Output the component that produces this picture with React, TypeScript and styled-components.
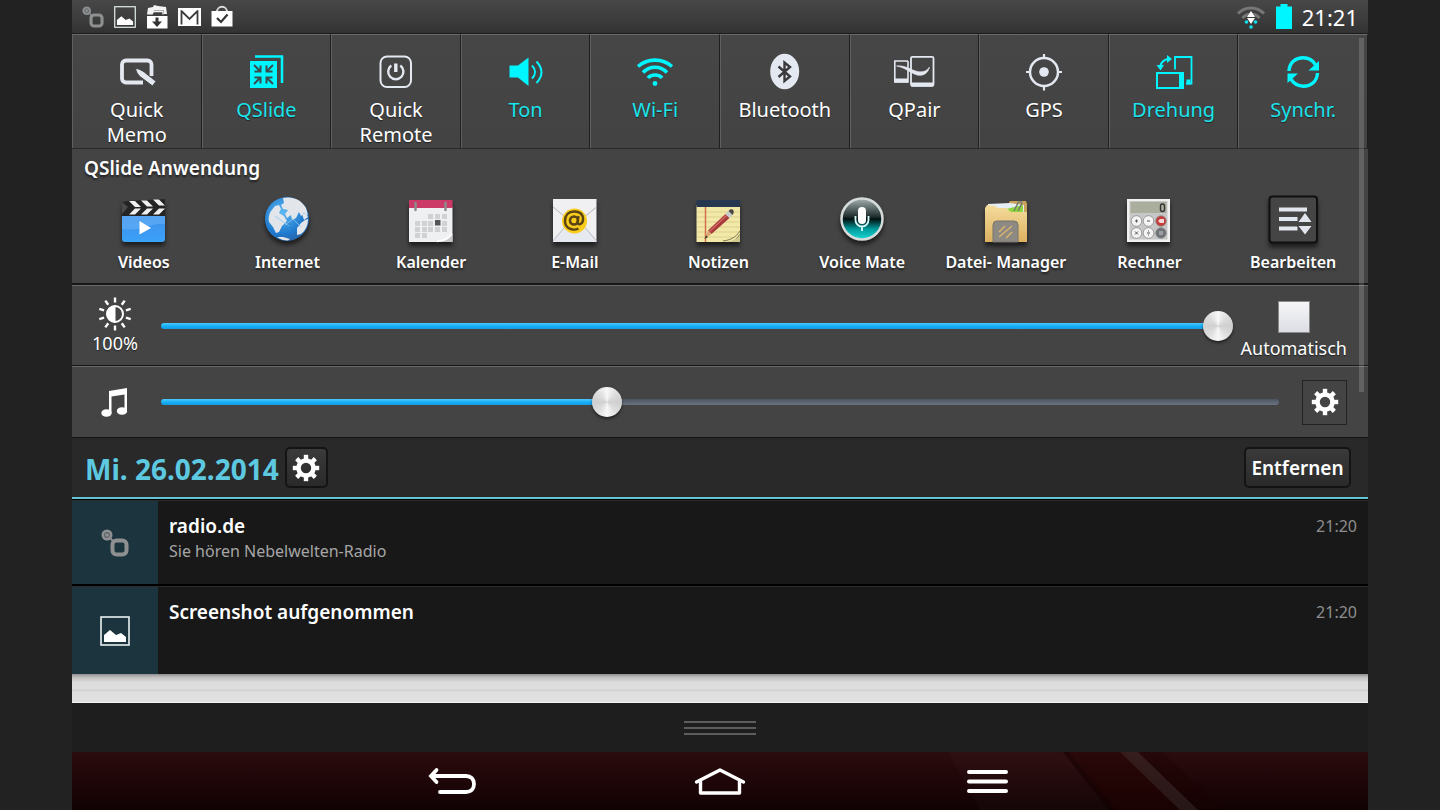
import React, { useState } from "react";
import styled, { createGlobalStyle, css } from "styled-components";

const GlobalStyle = createGlobalStyle`
  *, *::before, *::after { box-sizing: border-box; }
  body {
    margin: 0;
    background: #222222;
    color: #ffffff;
    font-family: "Noto Sans", "Open Sans", sans-serif;
  }
  button, input { font: inherit; color: inherit; }
  button { cursor: pointer; border: 0; padding: 0; background: none; }
  h1, h2, h3, p, ul { margin: 0; padding: 0; }
  ul { list-style: none; }
  svg { display: block; overflow: visible; }
`;

const Device = styled.div`
  width: 90%;
  min-height: 100vh;
  margin: 0 auto;
  display: flex;
  flex-direction: column;
  background: #1e1e1e;
`;

const StatusBar = styled.header`
  height: 33px;
  flex: none;
  padding: 0 10px;
  display: flex;
  align-items: center;
  justify-content: space-between;
  background: linear-gradient(#474747, #3c3c3c 60%, #323232);
`;

const StatusGroup = styled.div<{ $gap: number }>`
  display: flex;
  align-items: center;
  gap: ${(p) => p.$gap}px;
`;

const Clock = styled.time`
  font-size: 22px;
  line-height: 32px;
`;

const Controls = styled.section`
  position: relative;
  background: #444444;
`;

const ScrollThumb = styled.div`
  position: absolute;
  top: 5px;
  right: 4px;
  width: 5px;
  height: 354px;
  background: rgba(255, 255, 255, 0.16);
`;

const TileRow = styled.div`
  display: grid;
  grid-template-columns: repeat(10, 1fr);
  height: 116px;
  border-top: 1px solid #1c1c1c;
  border-bottom: 1px solid #2a2a2a;
`;

const Tile = styled.button<{ $on?: boolean }>`
  min-width: 0;
  padding-top: 17px;
  display: flex;
  flex-direction: column;
  align-items: center;
  border-top: 1px solid #6a6a6a;
  border-left: 1px solid #606060;
  border-right: 1px solid #1f1f1f;
  background: linear-gradient(#464646, #434343);
  color: ${(p) => (p.$on ? "#1ce4ec" : "#ffffff")};
  font-size: 20px;
  line-height: 25px;
  text-shadow: 0 1px 1px #222222;

  svg { color: ${(p) => (p.$on ? "#00f6ff" : "#e4e8f0")}; }
  span { margin-top: 5px; width: 90px; display: flex; justify-content: center; text-align: center; }
`;

const AppSection = styled.section`
  height: 136px;
  border-bottom: 2px solid #171717;
  text-shadow: 0 2px 2px #222222;
`;

const SectionTitle = styled.h2`
  padding: 6px 12px 0;
  font-size: 19px;
  line-height: 26px;
  font-weight: 600;
`;

const AppGrid = styled.div`
  display: grid;
  grid-template-columns: repeat(9, 1fr);
  padding: 11px 3px 0 0;
`;

const AppButton = styled.button`
  display: flex;
  flex-direction: column;
  align-items: center;
  font-size: 16px;
  line-height: 24px;
  font-weight: 600;
  white-space: nowrap;
  text-shadow: inherit;
  svg { filter: drop-shadow(0 4px 2px rgba(0, 0, 0, 0.55)); }
  span { margin-top: 2px; }
`;

const SliderRow = styled.div<{ $height: number }>`
  height: ${(p) => p.$height}px;
  padding-right: 21px;
  display: flex;
  align-items: center;
  border-top: 1px solid #6a6a6a;
  border-bottom: 1px solid #161616;
  font-size: 18px;
  line-height: 24px;
  text-shadow: 0 1px 1px #222222;
`;

const SliderIcon = styled.label`
  width: 86px;
  margin-right: 3px;
  flex: none;
  display: flex;
  flex-direction: column;
  align-items: center;
`;

const Slider = styled.input`
  appearance: none;
  flex: 1;
  min-width: 0;
  height: 32px;
  margin: 0;
  background: transparent;

  &::-webkit-slider-runnable-track {
    height: 6px;
    border-radius: 3px;
    background:
      linear-gradient(#4cc8fc, #12abf6 60%, #1a9be0) 0 0 / var(--fill) 100% no-repeat,
      linear-gradient(#4c5462, #6b7280);
  }
  &::-webkit-slider-thumb {
    appearance: none;
    width: 30px;
    height: 30px;
    margin-top: -12px;
    border-radius: 50%;
    background: conic-gradient(#f8f8f8, #dedede 12%, #cfcfcf 25%, #dedede 38%, #f8f8f8 50%, #dedede 62%, #cfcfcf 75%, #dedede 88%, #f8f8f8);
    box-shadow: 0 2px 3px rgba(0, 0, 0, 0.5);
  }
`;

const AutoLabel = styled.label`
  margin-left: 8px;
  padding-top: 10px;
  display: flex;
  flex-direction: column;
  align-items: center;
  gap: 3px;
`;

const Checkbox = styled.input`
  appearance: none;
  width: 32px;
  height: 32px;
  margin: 0;
  border: 1px solid #8a8a8a;
  background: linear-gradient(#f6f6f8, #dcdee4);
  &:checked { background: #1ba8f2; }
`;

const raised = css`
  border: 2px solid #141414;
  border-radius: 5px;
  background: linear-gradient(#3a3a3a, #2a2a2a);
`;

const SquareButton = styled.button<{ $raised?: boolean }>`
  width: ${(p) => (p.$raised ? 43 : 45)}px;
  height: ${(p) => (p.$raised ? 41 : 45)}px;
  flex: none;
  display: grid;
  place-items: center;
  border: 1px solid #222222;
  ${(p) => p.$raised && raised}
`;

const VolumeSettings = styled.div`
  margin-left: 23px;
`;

const DateBar = styled.header`
  height: 61px;
  flex: none;
  padding: 0 17px 0 13px;
  display: flex;
  align-items: center;
  gap: 6px;
  background: #292929;
  border-bottom: 2px solid #62c5d6;
`;

const DateText = styled.h1`
  padding-top: 2px;
  font-size: 28px;
  line-height: 40px;
  font-weight: 700;
  color: #5dc9e1;
`;

const ClearButton = styled.button`
  ${raised}
  margin-left: auto;
  width: 107px;
  height: 41px;
  font-size: 19px;
  line-height: 28px;
  font-weight: 600;
`;

const Notification = styled.li<{ $height: number }>`
  height: ${(p) => p.$height}px;
  padding-right: 11px;
  display: flex;
  border-top: 1px solid #2c2c2c;
  background: #181818;
  & + & { margin-top: 2px; }
`;

const NotificationList = styled.ul`
  padding-top: 1px;
  flex: none;
  background: #000000;
`;

const NotificationIcon = styled.div`
  width: 86px;
  display: grid;
  place-items: center;
  background: #1c343e;
`;

const NotificationBody = styled.div`
  flex: 1;
  padding: 12px 11px 0;
`;

const NotificationTitle = styled.h3`
  font-size: 19px;
  line-height: 26px;
  font-weight: 600;
`;

const NotificationText = styled.p`
  font-size: 16px;
  line-height: 24px;
  color: #a6a6a6;
`;

const NotificationTime = styled.time`
  padding-top: 13px;
  font-size: 16px;
  line-height: 24px;
  color: #8e8e8e;
`;

const PaperEdge = styled.div`
  height: 29px;
  flex: none;
  background: linear-gradient(
    #8e8e8e 0, #bcbcbc 3px, #dcdcdc 8px, #dfdfdf 15px, #cecece 16px, #e0e0e0 18px, #e0e0e0
  );
  border-bottom: 1px solid #f2f2f2;
`;

const DragHandle = styled.button`
  flex: 1 0 49px;
  width: 100%;
  display: flex;
  flex-direction: column;
  align-items: center;
  justify-content: center;
  gap: 4px;
  background: #1e1e1e;
`;

const HandleLine = styled.span`
  width: 72px;
  height: 2px;
  background: #5c5c5c;
`;

const NavBar = styled.nav`
  position: relative;
  height: 58px;
  flex: none;
  overflow: hidden;
  display: grid;
  grid-template-columns: repeat(3, 268px);
  justify-content: center;
  background: linear-gradient(#2b0c0e, #1c0507 60%, #110203);
`;

const NavStreaks = styled.svg`
  position: absolute;
  top: 0;
  right: 0;
`;

const NavButton = styled.button`
  position: relative;
  display: grid;
  place-items: center;
`;

/* ---------- status icons ---------- */

const RadioMark = ({ size }: { size: number }) => (
  <svg width={size} height={size} viewBox="0 0 28 28" fill="none" stroke="#8d8f90">
    <circle cx="6" cy="6" r="5.500" fill="#8d8f90" stroke="none" />
    <circle cx="6" cy="6" r="2.400" stroke="#5c6468" strokeWidth="1.200" />
    <path d="M8 8l5 5" strokeWidth="2" />
    <rect x="11.500" y="11.500" width="14" height="14" rx="4" strokeWidth="4" />
  </svg>
);

const PictureMark = ({ size }: { size: number }) => (
  <svg width={size} height={size} viewBox="0 0 30 30">
    <rect x="1" y="1" width="28" height="28" fill="none" stroke="#e9f1f1" strokeWidth="1.6" />
    <path d="M4 26v-7l6-5 6 5 5-2 5 4v5z" fill="#fff" />
  </svg>
);

const InboxMark = () => (
  <svg width="22" height="24" viewBox="0 0 22 24">
    <path d="M1 9.500L2 3l5-1 1-2 4 1 8 1 1 7h-3V5.500H8L5 9.500z" fill="#f4f4f4" />
    <path d="M5.500 9.500l2-3h9.500v3" fill="none" stroke="#f4f4f4" strokeWidth="1.400" />
    <rect x="1" y="11" width="20.500" height="12.500" fill="#fff" />
    <path d="M9.500 12.500h3v4H16l-5 5.500-5-5.500h3.500z" fill="#333" />
  </svg>
);

const GmailMark = () => (
  <svg width="23" height="18" viewBox="0 0 23 18">
    <rect width="23" height="18" fill="#fff" />
    <path d="M3.500 16.500V3l8 8 8-8v13.500" fill="none" stroke="#3c3c3c" strokeWidth="1.800" />
    <path d="M1 1.200h21" stroke="#fff" strokeWidth="2" />
  </svg>
);

const StoreMark = () => (
  <svg width="22" height="22" viewBox="0 0 22 22">
    <path d="M6 6C6 -1 16 -1 16 6" fill="none" stroke="#ddd" strokeWidth="1.800" />
    <path d="M.500 5h21v15.500H.500z" fill="#fff" />
    <path d="M6 12l4 4 6.500-7.500" fill="none" stroke="#333" strokeWidth="2.200" />
  </svg>
);

const StatusWifi = () => (
  <svg width="30" height="24" viewBox="0 0 30 24" fill="none">
    <path d="M2 8.500C9 1 21 1 28 8.500" stroke="#777" strokeWidth="3" />
    <path d="M6.500 13C11 8 19 8 23.500 13" stroke="#777" strokeWidth="3" />
    <path d="M15 6l4 6h-8zM11 13h8l-4 6z" fill="#fff" />
    <circle cx="10.500" cy="17" r="1.800" fill="#12dff0" />
    <circle cx="19.500" cy="17" r="1.800" fill="#12dff0" />
    <circle cx="15" cy="22" r="1.800" fill="#12dff0" />
  </svg>
);

const Battery = () => (
  <svg width="16" height="25" viewBox="0 0 16 25" fill="#00f6ff">
    <path d="M4.500 0h7v2.500H16V25H0V2.500h4.500z" />
  </svg>
);

/* ---------- quick setting icons ---------- */

const TileIcon = ({ children }: { children: React.ReactNode }) => (
  <svg width="40" height="40" viewBox="0 0 40 40" fill="none" stroke="currentColor">
    {children}
  </svg>
);

const tiles: { label: string; on?: boolean; icon: React.ReactNode }[] = [
  {
    label: "Quick Memo",
    icon: (
      <>
        <path d="M26 30.500H9a4 4 0 0 1-4-4v-14a4 4 0 0 1 4-4h21.500a4 4 0 0 1 4 4V24" strokeWidth="3.800" />
        <path d="M18.500 16.500c3 0 6 1.500 9 3.800l11.500 9-3.500 4.700-12-9c-2.500-2-4.500-5-5-8.500z" fill="currentColor" stroke="#444" strokeWidth="1" />
      </>
    ),
  },
  {
    label: "QSlide",
    on: true,
    icon: (
      <>
        <path d="M9 4.500h27V31" strokeWidth="2.500" />
        <rect x="4" y="9" width="27" height="27" fill="currentColor" stroke="none" />
        <g stroke="#3c4a4c" strokeWidth="2">
          <path d="M8 13l6 6M14.500 13.500v6h-6M27 13l-6 6M20.500 13.500v6h6M8 32l6-6M14.500 31.500v-6h-6M27 32l-6-6M20.500 31.500v-6h6" />
        </g>
      </>
    ),
  },
  {
    label: "Quick Remote",
    icon: (
      <>
        <rect x="4.500" y="4.500" width="30.500" height="30.500" rx="6.500" strokeWidth="2" />
        <path d="M15.300 13.500a7.600 7.600 0 1 0 9 0" strokeWidth="2.400" />
        <path d="M19.800 11.500v8.500" strokeWidth="3.400" />
      </>
    ),
  },
  {
    label: "Ton",
    on: true,
    icon: (
      <>
        <path d="M3.500 13.500h8.500l10.500-8v28.500l-10.500-8.500h-8.500z" fill="currentColor" stroke="none" />
        <path d="M26 13.500c4 4 4 9 0 13M30.500 9.500c6.500 7 6.500 14.500 0 21.500" strokeWidth="2" />
      </>
    ),
  },
  {
    label: "Wi-Fi",
    on: true,
    icon: (
      <>
        <path d="M3 14.500C12.500 6 27.500 6 37 14.500M8 20.500C14.500 13.500 25.500 13.500 32 20.500M13 26C16 22 24 22 27 26" strokeWidth="3.600" />
        <circle cx="20" cy="31.500" r="2.400" fill="currentColor" stroke="none" />
      </>
    ),
  },
  {
    label: "Bluetooth",
    icon: (
      <>
        <ellipse cx="19.700" cy="19.500" rx="14.500" ry="17.800" fill="currentColor" stroke="none" />
        <path d="M13.500 14.500l11.500 10-5.500 4.500V10.500l5.500 4.500-11.500 10" stroke="#3a3a3c" strokeWidth="2.400" />
      </>
    ),
  },
  {
    label: "QPair",
    icon: (
      <>
        <path d="M14 9H.800v21H14V9" strokeWidth="1.600" />
        <path d="M14 28.500H1" strokeWidth="4" />
        <rect x="17" y="4.800" width="22.500" height="29" rx="1.500" strokeWidth="1.800" />
        <path d="M17 32.500h22.500" strokeWidth="4" />
        <path d="M2.500 14c9-1 14 4 21 5.500 5 1 9 0 12-4.500C34 22 28 25 21.500 22.500 15 20 10 15 2.500 14z" fill="currentColor" strokeWidth=".600" />
      </>
    ),
  },
  {
    label: "GPS",
    icon: (
      <>
        <circle cx="20" cy="20" r="14" strokeWidth="2.500" />
        <circle cx="20" cy="20" r="4.800" fill="currentColor" stroke="none" />
        <path d="M20 2v5M20 33v5.500M2 20h5M33 20h5" strokeWidth="2.200" />
      </>
    ),
  },
  {
    label: "Drehung",
    on: true,
    icon: (
      <>
        <rect x="3" y="21" width="26" height="15" strokeWidth="2" />
        <path d="M27.500 20.500v16" strokeWidth="5" />
        <path d="M21 17.500V5h16.500v26.500H32" strokeWidth="1.800" />
        <path d="M34.500 27.500v5" strokeWidth="4" />
        <path d="M6 15c1-4.500 4-7.500 8-8" strokeWidth="2.200" />
        <path d="M13 3l5 4-5 4zM2.500 13h7.500l-3.500 5.500z" fill="currentColor" stroke="none" />
      </>
    ),
  },
  {
    label: "Synchr.",
    on: true,
    icon: (
      <>
        <path d="M6 19C6.500 10 13 5.800 20 5.800c5.500 0 10 2.700 12.500 7M34.500 21C34 30 27.500 34.200 20.500 34.200c-5.500 0-10-2.700-12.500-7" strokeWidth="3.400" />
        <path d="M36 9v9.500H25.500zM4.500 31v-9.500H15z" fill="currentColor" stroke="none" />
      </>
    ),
  },
];

/* ---------- app icons ---------- */

const AppIcon = ({ children }: { children: React.ReactNode }) => (
  <svg width="56" height="56" viewBox="0 0 56 56" fill="none">
    {children}
  </svg>
);

const calendarDays = [
  [25, 22], [32, 22], [39, 22],
  [12, 29], [19, 29], [25, 29], [39, 29],
  [12, 35], [19, 35], [25, 35], [32, 35], [39, 35],
  [12, 41], [19, 41],
];

const apps: { label: string; icon: React.ReactNode }[] = [
  {
    label: "Videos",
    icon: (
      <>
        <defs>
          <linearGradient id="video" x2="0" y2="1">
            <stop stopColor="#3f8fe8" />
            <stop offset="1" stopColor="#3ba2fa" />
          </linearGradient>
        </defs>
        <path d="M6 10l6-1 37-2v17H6z" fill="#242424" />
        <path d="M6 10l6 5-6 7z" fill="#4a4a4a" />
        <path d="M13 9h6l6 6h-6zM25 8.500h6l6 6h-6zM37 7.500h6l6 6h-6zM19 16.500h6l-6 6h-6zM31 16.500h6l-6 6h-6zM43 16.500h6l-6 6h-6z" fill="#f0f0f0" />
        <path d="M6 24h43v23a3 3 0 0 1-3 3H9a3 3 0 0 1-3-3z" fill="url(#video)" />
        <path d="M6 24h43v8c-15-2-20 8-43 5z" fill="#6db8fb" opacity=".5" />
        <path d="M23.500 29v13.500l11.500-6.500z" fill="#fff" />
      </>
    ),
  },
  {
    label: "Internet",
    icon: (
      <>
        <defs>
          <radialGradient id="globe" cx=".4" cy=".35" r=".7">
            <stop stopColor="#5cb8f2" />
            <stop offset=".7" stopColor="#1f7ace" />
            <stop offset="1" stopColor="#2a62a4" />
          </radialGradient>
        </defs>
        <circle cx="28" cy="27" r="22" fill="url(#globe)" />
        <g fill="#e2e6ea">
          <path d="M24 6c9-2 18 1 23 10l2 7-4-2-3 3-2-4-3 6-4 2-1-5-4 3-2-4 3-4-5-1-2-4 3-2z" />
          <path d="M12 19l4-5 4-1 2 4-2 4 5 3 3 5-5 5-3 6-3 1-3-6-4-5c-1-4 0-8 2-11z" />
          <path d="M38 36l4-5 4-3 3-1c0 7-3 12-7 15l-4 1zM43 22l4-1 2 4-4 3zM18 45l6 0 7 2-2 1.500c-4 0-8-1-11-3.500z" />
        </g>
        <path d="M26 33l8-6 8 8M16 24l14 10" stroke="#8cc8f4" strokeWidth=".800" />
      </>
    ),
  },
  {
    label: "Kalender",
    icon: (
      <>
        <path d="M6 15h43.500v35H6z" fill="#eef0f1" />
        <path d="M6 8h43.500v8H6z" fill="#cc3a68" />
        <path d="M12.500 11v7M42.500 11v7" stroke="#8c8c8c" strokeWidth="2.500" strokeLinecap="round" />
        {calendarDays.map(([x, y]) => (
          <rect key={`${x}-${y}`} x={x} y={y} width="5" height="5" fill="#cfd1d2" />
        ))}
        <rect x="32" y="28" width="5.500" height="5.500" fill="#555" />
        <path d="M34 50c8 0 13-3 15.500-8v8z" fill="#c4c6c8" />
        <path d="M34 49.500c7-1 12-3 15-8" stroke="#fff" strokeWidth="1.500" />
      </>
    ),
  },
  {
    label: "E-Mail",
    icon: (
      <>
        <path d="M6 7h43.500v43H6z" fill="#f0f0f2" />
        <path d="M6 50l18-19h8l17.500 19z" fill="#e6e9ef" />
        <path d="M6 15l17 14L6 49M49.500 15l-17 14 17 20" stroke="#b4b6ba" />
        <circle cx="27.500" cy="29" r="12.500" fill="#f7cc1d" />
        <circle cx="27" cy="28.500" r="4" stroke="#5b4413" strokeWidth="2.600" />
        <path d="M31.500 24l-1 6.500c0 3 5 2 5.500-2.500C36.500 22 32.500 19.500 27.500 19.500c-6 0-9.500 4-9.500 9.500 0 8 8 10 13.500 7.500" stroke="#5b4413" strokeWidth="2.400" />
      </>
    ),
  },
  {
    label: "Notizen",
    icon: (
      <>
        <path d="M6.500 13H50v29l-7 8H6.500z" fill="#f2e9a8" />
        <path d="M6.500 8H50v7H6.500z" fill="#27374f" />
        <path d="M7 20h43M7 25h43M7 30h43M7 35h43M7 40h43M7 45h36" stroke="#dccf8b" />
        <path d="M15.500 15v35" stroke="#d4714f" strokeWidth="1.500" />
        <path d="M32 50c9 0 16-3 18-8v8z" fill="#d1c88c" />
        <path d="M33 49c8-1 13-4 17-10" stroke="#7b754f" />
        <path d="M18 38.500L35.500 22l4 4L21.500 42z" fill="#a93a3c" />
        <path d="M19.500 39.500L37 23" stroke="#d46a66" strokeWidth="1.300" />
        <path d="M35.500 22l3-3 4 4-3 3z" fill="#c6cacd" />
        <path d="M38.500 19c3-4 7.500-.500 4 4z" fill="#4c4545" />
        <path d="M18 38.500l-3.500 8.500 7-5z" fill="#dca776" />
        <path d="M16 43.500l-1.500 3.500 3.500-2z" fill="#332" />
      </>
    ),
  },
  {
    label: "Voice Mate",
    icon: (
      <>
        <defs>
          <linearGradient id="voice" x2="0" y2="1">
            <stop stopColor="#a6b1b1" />
            <stop offset=".45" stopColor="#1c2b2b" />
            <stop offset=".5" stopColor="#041010" />
            <stop offset=".75" stopColor="#009d9e" />
            <stop offset="1" stopColor="#1cd9d5" />
          </linearGradient>
        </defs>
        <circle cx="28" cy="27" r="20.500" fill="url(#voice)" stroke="#d5dada" strokeWidth="2.500" />
        <rect x="24" y="15" width="8" height="17" rx="4" fill="#fff" />
        <path d="M21.500 24v4a6.500 6.500 0 0 0 13 0v-4M28 34.500V39" stroke="#d5fafa" strokeWidth="1.800" />
      </>
    ),
  },
  {
    label: "Datei- Manager",
    icon: (
      <>
        <defs>
          <linearGradient id="folder" x2="0" y2="1">
            <stop stopColor="#f5dc9c" />
            <stop offset="1" stopColor="#dcb160" />
          </linearGradient>
        </defs>
        <path d="M29 14l3-5h16l1 3v30H29z" fill="#c9a359" />
        <path d="M10 12l22-1 14 2v9H10z" fill="#e5eef5" />
        <path d="M28 17l17-4v7H32z" fill="#8fd63e" />
        <path d="M7 16l2-3 8 1 3 2h8l5 4h16v30H7z" fill="url(#folder)" />
        <path d="M36 19l4-8c2-3 5-1 3 2l-3 6" stroke="#757b72" strokeWidth="1.500" />
        <path d="M15 50V33a4 4 0 0 1 4-4h17a4 4 0 0 1 4 4v17z" fill="#8d8a84" stroke="#77746e" />
        <path d="M21 40l6-6M21 45l13-11M28 46l6-6" stroke="#d9b56e" strokeWidth="1.500" />
      </>
    ),
  },
  {
    label: "Rechner",
    icon: (
      <>
        <path d="M6 7h43v43H6z" fill="#f1f1f0" />
        <path d="M8.500 9h38v38.500h-38z" fill="#c6c7c6" />
        <path d="M9.500 10h36v11h-36z" fill="#a9ae9d" />
        <rect x="39.500" y="12" width="4" height="7.500" rx="2" stroke="#333" strokeWidth="1.400" />
        {[15.500, 27.500, 40].map((x) =>
          [29, 41].map((y) => (
            <circle key={`${x}-${y}`} cx={x} cy={y} r="5.300" fill={x === 40 ? (y === 29 ? "#c43c3c" : "#6f7276") : "#f4f4f4"} stroke="#8d8d8d" strokeWidth=".8" />
          )),
        )}
        <path d="M14 29h3M15.500 27.500v3M26 29h3M14 39.500l3 3M17 39.500l-3 3M26 41h3M27.500 38.500v1M27.500 42.500v1" stroke="#555" />
        <path d="M37 29l2-2h4v4h-4z" fill="#f4d6d6" />
        <path d="M38 40h4M38 42h4" stroke="#c9cccf" />
      </>
    ),
  },
  {
    label: "Bearbeiten",
    icon: (
      <>
        <rect x="4.500" y="4.500" width="47.500" height="46" rx="3" fill="#454545" stroke="#101010" strokeWidth="2" />
        <path d="M14 17.500h28M14 27h18.500M14 36.500h18.500" stroke="#e2e6ee" strokeWidth="4" />
        <path d="M31 31l9-11 9 11zM31 33h17l-8.500 10z" fill="#454545" />
        <path d="M33.500 30l6.500-9 6.500 9zM33.500 34h13l-6.500 8.500z" fill="#e2e6ee" />
      </>
    ),
  },
];

/* ---------- slider and button icons ---------- */

const SunIcon = () => (
  <svg width="34" height="34" viewBox="0 0 34 34" fill="none" stroke="#fff">
    <circle cx="17" cy="17" r="8" strokeWidth="2" />
    <path d="M17 9v16a8 8 0 0 1 0-16z" fill="#fff" />
    {Array.from({ length: 10 }, (_, i) => (
      <path key={i} d="M17 .500v5" strokeWidth="2.400" transform={`rotate(${i * 36} 17 17)`} />
    ))}
  </svg>
);

const NoteIcon = () => (
  <svg width="30" height="30" viewBox="0 0 30 30" fill="#fff">
    <path d="M9 4l18-3v22h-2.500V7.500l-13 2V26H9z" />
    <ellipse cx="6.500" cy="26" rx="5.200" ry="3.800" />
    <ellipse cx="22" cy="24" rx="5.200" ry="3.800" />
  </svg>
);

const GearIcon = () => (
  <svg width="28" height="28" viewBox="0 0 28 28" fill="none" stroke="#fff">
    <circle cx="14" cy="14" r="7.500" strokeWidth="4.600" />
    {Array.from({ length: 8 }, (_, i) => (
      <path key={i} d="M14 .800V6" strokeWidth="4.400" transform={`rotate(${i * 45} 14 14)`} />
    ))}
  </svg>
);

const SettingsButton = ({ label, isRaised }: { label: string; isRaised?: boolean }) => (
  <SquareButton type="button" aria-label={label} $raised={isRaised}>
    <GearIcon />
  </SquareButton>
);

const thumbSize = 30;
const sliderFill = (ratio: number) =>
  ({ "--fill": `calc((100% - ${thumbSize}px) * ${ratio} + ${thumbSize / 2}px)` }) as React.CSSProperties;

export default function App() {
  const [brightness, setBrightness] = useState(100);
  const [volume, setVolume] = useState(396);
  const [auto, setAuto] = useState(false);

  return (
    <>
      <GlobalStyle />
      <Device>
        <StatusBar>
          <StatusGroup $gap={10}>
            <RadioMark size={22} />
            <PictureMark size={22} />
            <InboxMark />
            <GmailMark />
            <StoreMark />
          </StatusGroup>
          <StatusGroup $gap={10}>
            <StatusWifi />
            <Battery />
            <Clock>21:21</Clock>
          </StatusGroup>
        </StatusBar>

        <Controls>
          <TileRow>
            {tiles.map((tile) => (
              <Tile key={tile.label} type="button" $on={tile.on} aria-pressed={!!tile.on}>
                <TileIcon>{tile.icon}</TileIcon>
                <span>{tile.label}</span>
              </Tile>
            ))}
          </TileRow>

          <AppSection>
            <SectionTitle>QSlide Anwendung</SectionTitle>
            <AppGrid>
              {apps.map((app) => (
                <AppButton key={app.label} type="button">
                  <AppIcon>{app.icon}</AppIcon>
                  <span>{app.label}</span>
                </AppButton>
              ))}
            </AppGrid>
          </AppSection>

          <SliderRow $height={81}>
            <SliderIcon htmlFor="brightness">
              <SunIcon />
              <span>{brightness}%</span>
            </SliderIcon>
            <Slider
              id="brightness"
              type="range"
              aria-label="Helligkeit"
              max={100}
              value={brightness}
              onChange={(e) => setBrightness(Number(e.target.value))}
              style={sliderFill(brightness / 100)}
            />
            <AutoLabel>
              <Checkbox type="checkbox" checked={auto} onChange={(e) => setAuto(e.target.checked)} />
              Automatisch
            </AutoLabel>
          </SliderRow>

          <SliderRow $height={72}>
            <SliderIcon htmlFor="volume">
              <NoteIcon />
            </SliderIcon>
            <Slider
              id="volume"
              type="range"
              aria-label="Lautstärke"
              max={1000}
              value={volume}
              onChange={(e) => setVolume(Number(e.target.value))}
              style={sliderFill(volume / 1000)}
            />
            <VolumeSettings>
              <SettingsButton label="Toneinstellungen" />
            </VolumeSettings>
          </SliderRow>
          <ScrollThumb />
        </Controls>

        <DateBar>
          <DateText>Mi. 26.02.2014</DateText>
          <SettingsButton label="Einstellungen" isRaised />
          <ClearButton type="button">Entfernen</ClearButton>
        </DateBar>

        <NotificationList>
          <Notification $height={84}>
            <NotificationIcon>
              <RadioMark size={28} />
            </NotificationIcon>
            <NotificationBody>
              <NotificationTitle>radio.de</NotificationTitle>
              <NotificationText>Sie hören Nebelwelten-Radio</NotificationText>
            </NotificationBody>
            <NotificationTime>21:20</NotificationTime>
          </Notification>
          <Notification $height={88}>
            <NotificationIcon>
              <PictureMark size={30} />
            </NotificationIcon>
            <NotificationBody>
              <NotificationTitle>Screenshot aufgenommen</NotificationTitle>
            </NotificationBody>
            <NotificationTime>21:20</NotificationTime>
          </Notification>
        </NotificationList>

        <PaperEdge />
        <DragHandle type="button" aria-label="Schließen">
          <HandleLine />
          <HandleLine />
          <HandleLine />
        </DragHandle>

        <NavBar>
          <NavStreaks width="420" height="58" viewBox="0 0 420 58" aria-hidden="true">
            <path d="M0 0h115l47 58H32z" fill="#ffffff" opacity=".02" />
            <path d="M115 0h60l60 58h-73z" fill="#2c0400" opacity=".3" />
            <path d="M115 0h6l47 58h-8z" fill="#000" opacity=".2" />
            <path d="M172 0h18l60 58h-18z" fill="#4c403c" opacity=".35" />
            <path d="M190 0h24l62 58h-26z" fill="#1c0000" opacity=".3" />
          </NavStreaks>
          <NavButton type="button" aria-label="Zurück">
            <svg width="48" height="30" viewBox="0 0 48 30" fill="none" stroke="#fff" strokeWidth="3.800" strokeLinecap="round">
              <path d="M8.500 4L3 10l5.500 6M3 10h35c5 0 8 3 8 8s-3 8-8 8H12" />
            </svg>
          </NavButton>
          <NavButton type="button" aria-label="Startseite">
            <svg width="52" height="30" viewBox="0 0 52 30" fill="none" stroke="#fff" strokeWidth="3.400" strokeLinecap="round" strokeLinejoin="round">
              <path d="M2.500 16L26 4l23.500 12M6.500 15.500V27h39V15.500" />
            </svg>
          </NavButton>
          <NavButton type="button" aria-label="Menü">
            <svg width="42" height="26" viewBox="0 0 42 26" fill="none" stroke="#fff" strokeWidth="4" strokeLinecap="round">
              <path d="M2 4h37M2 13.500h37M2 23h37" />
            </svg>
          </NavButton>
        </NavBar>
      </Device>
    </>
  );
}
